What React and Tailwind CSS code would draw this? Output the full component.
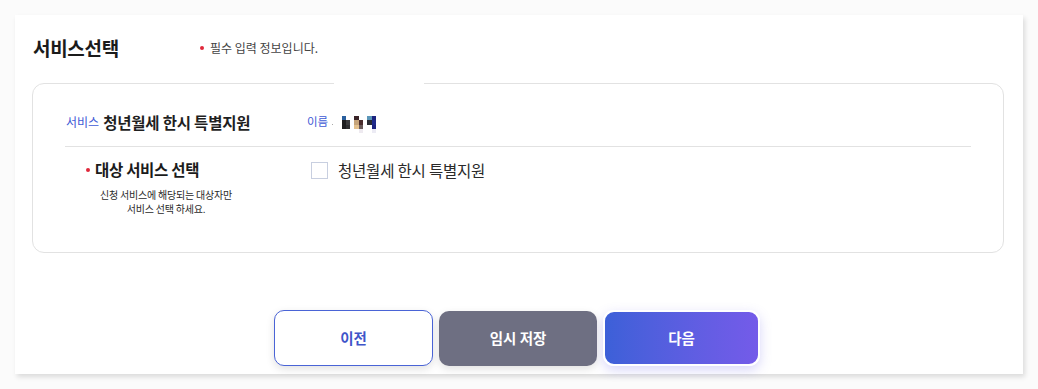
import React from 'react';

const FONT = { fontFamily: '"Noto Sans CJK KR", "Noto Sans", sans-serif' };

// mosaic used to hide the applicant's name
const MOSAIC = [
    ['#fff', '#2a5f9e', '#fff', '#fff', '#3a2428', '#fff', '#fff', '#5b96b8', '#1c237f'],
    ['#fff', '#1d1d1f', '#3b3b3d', '#fff', '#c6a47a', '#4a2c2c', '#fff', '#2a2d34', '#1f2a8a'],
    ['#fff', '#1d1d1f', '#2e2e30', '#fff', '#e4c18e', '#6a5b5b', '#fff', '#fff', '#1c237f'],
    ['#fff', '#fff', '#fff', '#fff', '#fff', '#eeeaf0', '#fff', '#fff', '#ecebf4'],
];

const Mosaic = () => (
    <div className="flex flex-col ml-[4px] mt-[3px]">
        {MOSAIC.map((row, i) => (
            <div key={i} className="flex">
                {row.map((c, j) => (
                    <span key={j} className="block w-[4.33px] h-[4.33px]" style={{ backgroundColor: c }} />
                ))}
            </div>
        ))}
    </div>
);

const App = () => {
    return (
        <div className="w-full h-[389px] bg-[#fbfbfb] pt-[15px] pl-[15px]" style={FONT}>
            <div className="w-[1008px] h-[359px] bg-white shadow-[2px_3px_5px_rgba(0,0,0,0.13)] flex flex-col pl-[17px] pr-[19px]">
                {/* Header */}
                <div className="flex items-center h-[26px] mt-[20px] pl-[1px]">
                    <h2 className="text-[19px] font-bold text-[#1b1b1b] w-[167px] tracking-[-0.3px]">서비스선택</h2>
                    <p className="flex items-center text-[12px] text-[#444]">
                        <span className="w-[4px] h-[4px] rounded-full bg-[#e0283a] mr-[6px]" />
                        필수 입력 정보입니다.
                    </p>
                </div>

                {/* Form box */}
                <div className="relative mt-[22px] h-[170px] rounded-[12px] border border-[#e2e2e2] px-[32px]">
                    <span className="absolute top-[-1px] left-[301px] w-[90px] h-[2px] bg-white" />

                    {/* Row 1 */}
                    <div className="flex items-center h-[63px] pt-[16px] border-b border-[#e2e2e2]">
                        <div className="flex items-center w-[242px]">
                            <span className="text-[12px] text-[#3f5bd6] ml-[1px] mr-[4px] mt-[-3px]">서비스</span>
                            <span className="text-[15.5px] font-semibold text-[#1f1f1f] tracking-[-0.2px]">청년월세 한시 특별지원</span>
                        </div>
                        <span className="text-[11.5px] text-[#3f5bd6] mt-[-3px]">이름</span>
                        <span className="w-[1px] h-[1px] bg-[#aaa] ml-[4px] mt-[3px]" />
                        <Mosaic />
                    </div>

                    {/* Row 2 */}
                    <div className="flex pt-[12px]">
                        <div className="w-[202px] flex flex-col">
                            <div className="flex items-center pl-[21px] h-[22px]">
                                <span className="w-[4px] h-[4px] rounded-full bg-[#e0283a] mr-[5px]" />
                                <span className="text-[15.5px] font-bold text-[#1b1b1b] tracking-[-0.3px]">대상 서비스 선택</span>
                            </div>
                            <p className="mt-[7px] text-center text-[10px] leading-[14px] text-[#2a2a2a] tracking-[-0.2px]">
                                신청 서비스에 해당되는 대상자만<br />서비스 선택 하세요.
                            </p>
                        </div>
                        <label className="flex items-start ml-[44px] pt-[1px]">
                            <span className="w-[17px] h-[17px] border border-[#c8cfe0] bg-white mt-[2px]" />
                            <span className="ml-[10px] text-[15.5px] text-[#2a2a2a] leading-[20px] tracking-[-0.2px]">청년월세 한시 특별지원</span>
                        </label>
                    </div>
                </div>

                {/* Buttons */}
                <div className="flex justify-center items-center gap-[6px] mt-[57px] pr-[2px]">
                    <button className="w-[159px] h-[56px] rounded-[10px] border border-[#4a64d6] bg-white text-[14.5px] font-bold text-[#3f55c9] shadow-[0_3px_8px_rgba(0,0,0,0.12)]">
                        이전
                    </button>
                    <button className="w-[158px] h-[55px] rounded-[10px] bg-[#6e6f82] text-[14.5px] font-bold text-white shadow-[0_3px_8px_rgba(0,0,0,0.12)]">
                        임시 저장
                    </button>
                    <button className="w-[157px] h-[56px] rounded-[11px] border-2 border-white bg-gradient-to-r from-[#3c60d8] to-[#745be9] text-[14.5px] font-bold text-white shadow-[0_4px_12px_rgba(100,90,230,0.25)]">
                        다음
                    </button>
                </div>
            </div>
        </div>
    );
};

export default App;
